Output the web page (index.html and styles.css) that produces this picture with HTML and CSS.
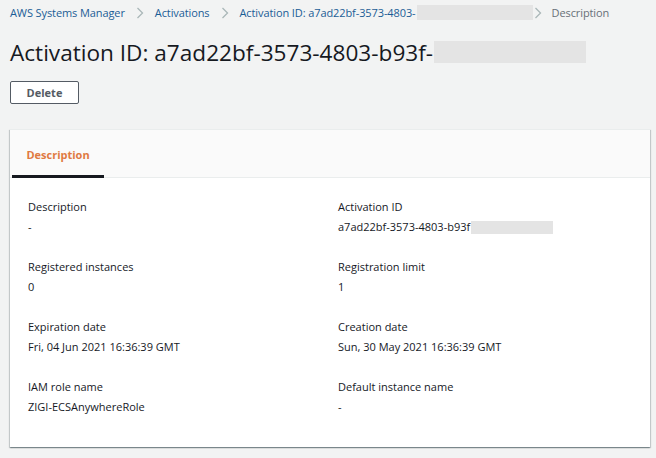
FILE: index.html
```html
<!DOCTYPE html>
<html>
<head>
<meta charset="utf-8">
<link rel="stylesheet" href="styles.css">
</head>
<body>
<nav class="crumbs">
  <a class="crumb">AWS Systems Manager</a>
  <span class="chev"><svg width="8" height="12" viewBox="0 0 8 12"><path d="M1.5 1l5 5-5 5" fill="none" stroke="#aab7b8" stroke-width="1.3"/></svg></span>
  <a class="crumb">Activations</a>
  <span class="chev"><svg width="8" height="12" viewBox="0 0 8 12"><path d="M1.5 1l5 5-5 5" fill="none" stroke="#aab7b8" stroke-width="1.3"/></svg></span>
  <a class="crumb">Activation ID: a7ad22bf-3573-4803-</a><span class="redact crumb-redact"></span>
  <span class="chev tight"><svg width="8" height="12" viewBox="0 0 8 12"><path d="M1.5 1l5 5-5 5" fill="none" stroke="#aab7b8" stroke-width="1.3"/></svg></span>
  <span class="crumb current">Description</span>
</nav>
<h1 class="title"><span>Activation ID: a7ad22bf-3573-4803-b93f-</span><span class="redact title-redact"></span></h1>
<div class="actions"><button class="btn">Delete</button></div>
<section class="card">
  <div class="tabs">
    <div class="tab active">Description</div>
  </div>
  <div class="grid">
    <div class="field"><div class="label">Description</div><div class="value">-</div></div>
    <div class="field"><div class="label">Activation ID</div><div class="value">a7ad22bf-3573-4803-b93f<span class="redact value-redact"></span></div></div>
    <div class="field"><div class="label">Registered instances</div><div class="value">0</div></div>
    <div class="field"><div class="label">Registration limit</div><div class="value">1</div></div>
    <div class="field"><div class="label">Expiration date</div><div class="value">Fri, 04 Jun 2021 16:36:39 GMT</div></div>
    <div class="field"><div class="label">Creation date</div><div class="value">Sun, 30 May 2021 16:36:39 GMT</div></div>
    <div class="field"><div class="label">IAM role name</div><div class="value">ZIGI-ECSAnywhereRole</div></div>
    <div class="field"><div class="label">Default instance name</div><div class="value">-</div></div>
  </div>
</section>
</body>
</html>
```
FILE: styles.css
```css
* { box-sizing: border-box; }
html, body { margin: 0; padding: 0; }
body {
  background: #f2f3f3;
  font-family: "Open Sans", "Noto Sans", sans-serif;
  color: #16191f;
  width: 656px;
  height: 458px;
  overflow: hidden;
  padding: 0 6px 0 10px;
}
.crumbs {
  display: flex;
  align-items: center;
  height: 25px;
  font-size: 11px;
  letter-spacing: -0.1px;
}
.crumb { color: #1b5d96; white-space: nowrap; }
.crumb.current { color: #687078; }
.chev { display: flex; width: 30px; justify-content: center; }
.chev.tight { width: 18px; justify-content: flex-start; margin-left: 1px; }
.redact { display: inline-block; background: #e4e4e4; }
.crumb-redact { width: 116px; height: 15px; margin-left: 1px; }
.title {
  display: flex;
  align-items: center;
  margin: 12px 0 0 0;
  font-weight: 400;
  font-size: 22.6px;
  height: 30px;
  letter-spacing: 0;
}
.title-redact { width: 152px; height: 22px; margin-left: 1px; }
.actions { margin-top: 13px; }
.btn {
  width: 69px;
  height: 23px;
  border: 1px solid #545b64;
  border-radius: 2px;
  background: #fff;
  color: #545b64;
  font-family: inherit;
  font-weight: 700;
  font-size: 11px;
  padding: 0;
}
.card {
  margin-top: 25px;
  width: 640px;
  height: 318px;
  background: #fff;
  box-shadow: 0 1px 1px 0 rgba(0,28,36,0.3), 1px 1px 1px 0 rgba(0,28,36,0.15), -1px 1px 1px 0 rgba(0,28,36,0.15);
  border-top: 1px solid #eaeded;
}
.tabs {
  display: flex;
  height: 48px;
  background: #fafafa;
  border-bottom: 1px solid #eaeded;
  padding-left: 2px;
}
.tab {
  width: 92px;
  display: flex;
  align-items: center;
  justify-content: center;
  font-size: 11px;
  font-weight: 700;
  color: #e07941;
  padding-top: 3px;
}
.tab.active { border-bottom: 3px solid #16191f; margin-bottom: -1px; }
.grid {
  display: grid;
  grid-template-columns: 310px 1fr;
  padding: 19px 18px 0 18px;
  row-gap: 20px;
}
.field { font-size: 11px; line-height: 20px; }
.label { color: #16191f; }
.value { color: #16191f; display: flex; align-items: center; }
.value-redact { width: 82px; height: 13px; margin-left: 1px; }
```
